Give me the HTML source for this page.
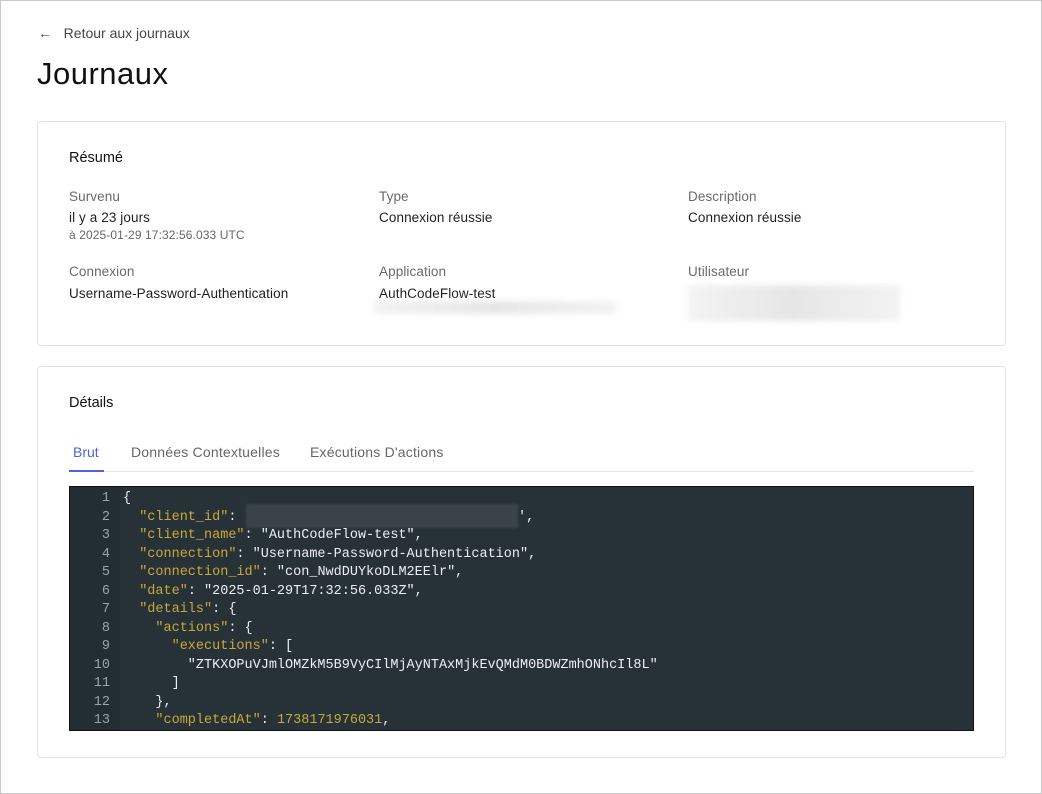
<!DOCTYPE html>
<html><head><meta charset="utf-8"><style>
*{box-sizing:border-box;margin:0;padding:0}
body{width:1042px;height:794px;background:#fff;font-family:"Liberation Sans",sans-serif;color:#1f1f1f;position:relative;overflow:hidden;box-shadow:inset 0 0 0 1px #c8c8c8}
.a{position:absolute;white-space:nowrap}
.card{position:absolute;left:37px;width:969px;border:1px solid #e3e3e3;border-radius:4px}
.lbl{font-size:13.5px;color:#6a6a6a;letter-spacing:0.1px}
.val{font-size:13.5px;color:#1f1f1f;letter-spacing:0.1px}
.blur{position:absolute;background:linear-gradient(90deg,#f3f3f3,#e6e6e6,#f3f3f3);filter:blur(3px)}
.code{position:absolute;left:69px;top:486px;width:905px;height:245px;background:#263238;border:1px solid #111;overflow:hidden;font-family:"Liberation Mono",monospace;font-size:13.5px;color:#eceff1}
.gut{position:absolute;left:0;top:0;width:50px;height:100%;background:#232e33}
.ln{position:absolute;height:18.5px;line-height:18.5px;white-space:pre}
.n{width:40px;text-align:right;color:#98a4aa}
.k{color:#c9a83a}
</style></head><body>
<div class="a" style="left:38px;top:25px;font-size:14px;color:#444">←&nbsp;&nbsp;&nbsp;Retour aux journaux</div>
<div class="a" style="left:37px;top:56px;font-size:31px;color:#111;letter-spacing:0.5px">Journaux</div>
<div class="card" style="top:121px;height:225px"></div>
<div class="a" style="left:69px;top:150px;font-size:14.5px;color:#111">Résumé</div>
<div class="a lbl" style="left:69px;top:189px">Survenu</div>
<div class="a val" style="left:69px;top:210px">il y a 23 jours</div>
<div class="a" style="left:69px;top:228px;font-size:12px;color:#666;letter-spacing:0.1px">à 2025-01-29 17:32:56.033 UTC</div>
<div class="a lbl" style="left:379px;top:189px">Type</div>
<div class="a val" style="left:379px;top:210px">Connexion réussie</div>
<div class="a lbl" style="left:688px;top:189px">Description</div>
<div class="a val" style="left:688px;top:210px">Connexion réussie</div>
<div class="a lbl" style="left:69px;top:264px">Connexion</div>
<div class="a val" style="left:69px;top:286px">Username-Password-Authentication</div>
<div class="a lbl" style="left:379px;top:264px">Application</div>
<div class="a val" style="left:379px;top:286px">AuthCodeFlow-test</div>
<div class="blur" style="left:374px;top:301px;width:242px;height:13px"></div>
<div class="a lbl" style="left:688px;top:264px">Utilisateur</div>
<div class="blur" style="left:688px;top:285px;width:212px;height:36px"></div>
<div class="card" style="top:366px;height:392px"></div>
<div class="a" style="left:69px;top:395px;font-size:14.5px;color:#111">Détails</div>
<div class="a" style="left:73px;top:444px;font-size:14px;color:#4f63d9">Brut</div>
<div class="a" style="left:131px;top:444px;font-size:14px;color:#666;letter-spacing:0.2px">Données Contextuelles</div>
<div class="a" style="left:310px;top:444px;font-size:14px;color:#666;letter-spacing:0.2px">Exécutions D'actions</div>
<div class="a" style="left:69px;top:471px;width:905px;height:1px;background:#e6e6e6"></div>
<div class="a" style="left:69px;top:470px;width:35px;height:2px;background:#4f63d9"></div>
<div class="code"><div class="gut"></div>
<div class="ln n" style="top:3px">1</div><div class="ln" style="top:3px;left:53px">{</div>
<div class="ln n" style="top:21.5px">2</div><div class="ln" style="top:21.5px;left:53px">  <span class="k">"client_id"</span>:</div>
<div style="position:absolute;left:176px;top:17px;width:272px;height:24px;background:#3a4448;filter:blur(1px)"></div><div class="ln" style="top:21.5px;left:448px">',</div>
<div class="ln n" style="top:40px">3</div><div class="ln" style="top:40px;left:53px">  <span class="k">"client_name"</span>: "AuthCodeFlow-test",</div>
<div class="ln n" style="top:58.5px">4</div><div class="ln" style="top:58.5px;left:53px">  <span class="k">"connection"</span>: "Username-Password-Authentication",</div>
<div class="ln n" style="top:77px">5</div><div class="ln" style="top:77px;left:53px">  <span class="k">"connection_id"</span>: "con_NwdDUYkoDLM2EElr",</div>
<div class="ln n" style="top:95.5px">6</div><div class="ln" style="top:95.5px;left:53px">  <span class="k">"date"</span>: "2025-01-29T17:32:56.033Z",</div>
<div class="ln n" style="top:114px">7</div><div class="ln" style="top:114px;left:53px">  <span class="k">"details"</span>: {</div>
<div class="ln n" style="top:132.5px">8</div><div class="ln" style="top:132.5px;left:53px">    <span class="k">"actions"</span>: {</div>
<div class="ln n" style="top:151px">9</div><div class="ln" style="top:151px;left:53px">      <span class="k">"executions"</span>: [</div>
<div class="ln n" style="top:169.5px">10</div><div class="ln" style="top:169.5px;left:53px">        "ZTKXOPuVJmlOMZkM5B9VyCIlMjAyNTAxMjkEvQMdM0BDWZmhONhcIl8L"</div>
<div class="ln n" style="top:188px">11</div><div class="ln" style="top:188px;left:53px">      ]</div>
<div class="ln n" style="top:206.5px">12</div><div class="ln" style="top:206.5px;left:53px">    },</div>
<div class="ln n" style="top:225px">13</div><div class="ln" style="top:225px;left:53px">    <span class="k">"completedAt"</span>: <span class="k">1738171976031</span>,</div>
</div>
</body></html>
